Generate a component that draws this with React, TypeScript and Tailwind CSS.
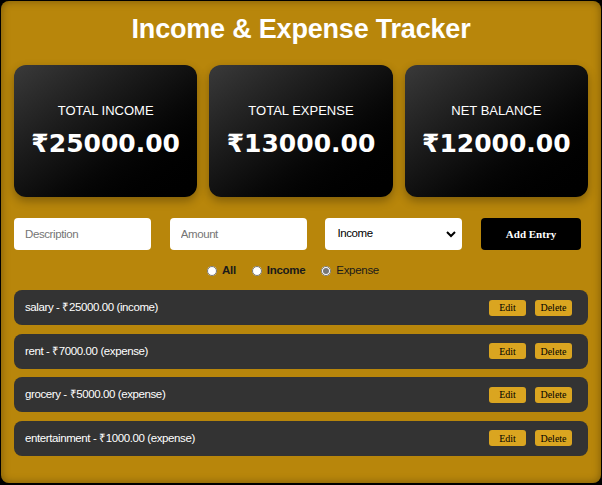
import { useState } from 'react';

type Entry = { id: number; desc: string; amount: number; type: 'income' | 'expense' };

const entries: Entry[] = [
  { id: 1, desc: 'salary', amount: 25000, type: 'income' },
  { id: 2, desc: 'rent', amount: 7000, type: 'expense' },
  { id: 3, desc: 'grocery', amount: 5000, type: 'expense' },
  { id: 4, desc: 'entertainment', amount: 1000, type: 'expense' },
];

const SummaryCard = ({ label, value }: { label: string; value: number }) => (
  <div className="flex h-[132px] flex-1 flex-col items-center justify-center gap-[9px] rounded-xl bg-gradient-to-br from-[#3a3a3a] to-black text-white shadow-[0_4px_10px_rgba(0,0,0,0.3)]">
    <div className="text-[13px] leading-[16px]">{label}</div>
    <div className="font-[family-name:'DejaVu_Sans',sans-serif] text-[25px] font-bold leading-[32px]">
      ₹{value.toFixed(2)}
    </div>
  </div>
);

export default function App() {
  const [filter, setFilter] = useState('expense');

  const income = entries.filter((e) => e.type === 'income').reduce((s, e) => s + e.amount, 0);
  const expense = entries.filter((e) => e.type === 'expense').reduce((s, e) => s + e.amount, 0);

  return (
    <div className="min-h-screen bg-black p-px font-[family-name:'Liberation_Sans',Arial,sans-serif]">
      <div className="rounded-lg bg-[#b8860b] px-[13px] pb-[27px] pt-[10px] shadow-[inset_0_0_8px_rgba(0,0,0,0.35)]">
        <h1 className="text-center text-[27px] font-bold leading-[36px] tracking-[-0.2px] text-white">
          Income &amp; Expense Tracker
        </h1>

        <div className="mt-[18px] flex gap-[12px]">
          <SummaryCard label="TOTAL INCOME" value={income} />
          <SummaryCard label="TOTAL EXPENSE" value={expense} />
          <SummaryCard label="NET BALANCE" value={income - expense} />
        </div>

        <div className="mt-[21px] flex gap-[18.7px] text-[11.5px] tracking-[-0.4px]">
          <input
            placeholder="Description"
            className="h-[32px] w-[137px] rounded bg-white px-[11px] text-black outline-none placeholder:text-[#757575]"
          />
          <input
            placeholder="Amount"
            className="h-[32px] w-[137px] rounded bg-white px-[11px] text-black outline-none placeholder:text-[#757575]"
          />
          <div className="relative h-[32px] w-[137px] rounded bg-white">
            <select className="h-full w-full appearance-none bg-transparent pl-[12px] text-black outline-none">
              <option>Income</option>
              <option>Expense</option>
            </select>
            <svg
              className="pointer-events-none absolute right-[6px] top-[11px]"
              width="10"
              height="10"
              viewBox="0 0 10 10"
              fill="none"
              stroke="black"
              strokeWidth="2"
            >
              <path d="M1 3l4 4 4-4" />
            </svg>
          </div>
          <button className="h-[32px] w-[100px] rounded bg-black font-[family-name:'Liberation_Serif',serif] text-[11px] font-bold tracking-normal text-white">
            Add Entry
          </button>
        </div>

        <div className="mt-[12px] flex justify-center text-[11.5px] tracking-[-0.3px] text-[#1a1a1a]">
          {['all', 'income', 'expense'].map((f) => (
            <label
              key={f}
              className={`mr-[16px] flex items-center gap-[5px] ${f === 'expense' ? 'font-normal' : 'font-bold'}`}
            >
              <input
                type="radio"
                name="filter"
                checked={filter === f}
                onChange={() => setFilter(f)}
                className="h-[10px] w-[10px] accent-[#767676]"
              />
              {f.charAt(0).toUpperCase() + f.slice(1)}
            </label>
          ))}
        </div>

        <ul className="mt-[11px] flex flex-col gap-[8.5px]">
          {entries.map((e) => (
            <li
              key={e.id}
              className="flex h-[35px] items-center justify-between rounded-lg bg-[#333] pl-[11px] pr-[16px] text-[11.5px] tracking-[-0.4px] text-white"
            >
              <span>
                {e.desc} - ₹{e.amount.toFixed(2)} ({e.type})
              </span>
              <div className="flex gap-[9px] font-[family-name:'Liberation_Serif',serif] text-[10px] tracking-normal text-black">
                <button className="h-[16px] w-[37px] rounded-[3px] bg-[#daa520]">Edit</button>
                <button className="h-[16px] w-[37px] rounded-[3px] bg-[#daa520]">Delete</button>
              </div>
            </li>
          ))}
        </ul>
      </div>
    </div>
  );
}
